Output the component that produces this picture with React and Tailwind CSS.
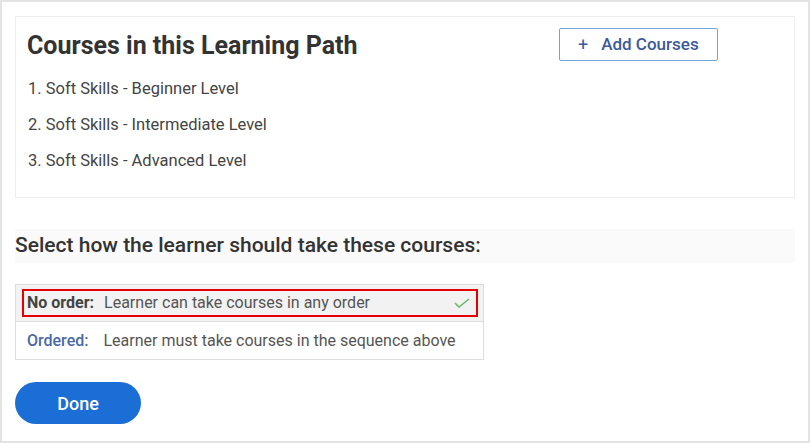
export default function App() {
  const courses = [
    '1. Soft Skills - Beginner Level',
    '2. Soft Skills - Intermediate Level',
    '3. Soft Skills - Advanced Level',
  ];

  return (
    <div
      className="w-[810px] h-[443px] bg-white border-2 border-[#e3e3e3] pt-[14px] pl-[13px] pr-[13px] text-[#333]"
      style={{ fontFamily: 'Roboto, "Liberation Sans", sans-serif' }}
    >
      {/* courses card */}
      <div className="w-[780px] h-[182px] border border-[#eeeeee] pt-[11px] pl-[11px]">
        <div className="flex items-center justify-between w-[691px] h-[33px]">
          <h2 className="text-[25px] font-bold text-[#333] leading-none pt-[2px]">Courses in this Learning Path</h2>
          <button className="flex items-center h-[33px] w-[159px] pl-[18px] border border-[#6ea5da] rounded-[2px] text-[#3b5a9a] text-[17px] font-medium">
            <span className="text-[18px] font-normal mr-[13px] leading-none">+</span>
            Add Courses
          </button>
        </div>
        <ul className="mt-[10px] pl-[1px]">
          {courses.map((c) => (
            <li key={c} className="text-[16.5px] leading-[36px] text-[#444]">
              {c}
            </li>
          ))}
        </ul>
      </div>

      {/* order selection */}
      <div className="mt-[31px] w-[780px] h-[34px] bg-[#fafafa] flex items-center">
        <h3 className="text-[21px] font-medium text-[#333]">Select how the learner should take these courses:</h3>
      </div>

      <div className="mt-[21px] w-[469px] border border-[#dddddd]">
        <div className="h-[37px] bg-[#f2f2f2] pt-[4px] pb-[4px] pl-[6px] pr-[5px] border-b border-[#dddddd]">
          <div className="h-full border-2 border-[#e60000] flex items-center pl-[3px] pr-[6px] text-[16px]">
            <span className="font-bold text-[#444]">No order:</span>
            <span className="ml-[10px] text-[#555]">Learner can take courses in any order</span>
            <svg className="ml-auto" width="16" height="10" viewBox="0 0 16 10" fill="none">
              <path d="M1 5 L5 9 L15 1" stroke="#6cb86c" strokeWidth="1.6" />
            </svg>
          </div>
        </div>
        <div className="h-[37px] flex items-center pl-[11px] text-[16px]">
          <span className="font-medium text-[#4a69a8]">Ordered:</span>
          <span className="ml-[15px] text-[#555]">Learner must take courses in the sequence above</span>
        </div>
      </div>

      <button className="mt-[22px] w-[126px] h-[42px] rounded-full bg-[#1b6ed6] text-white text-[18px] font-medium">
        Done
      </button>
    </div>
  );
}
